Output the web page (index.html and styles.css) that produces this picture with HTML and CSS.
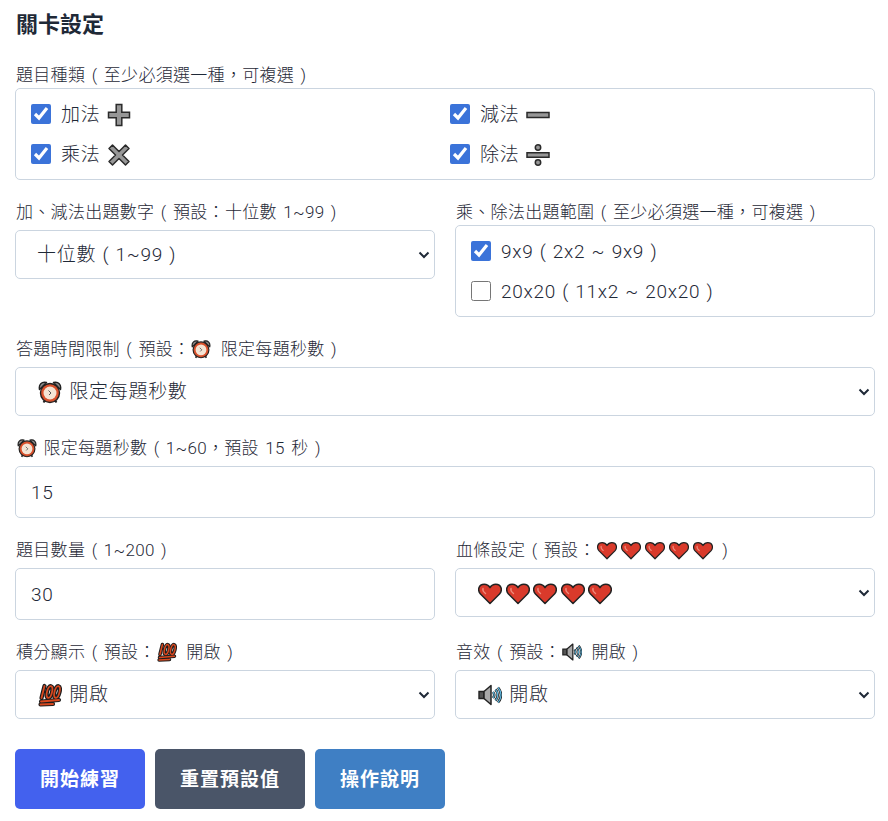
FILE: index.html
```html
<!DOCTYPE html>
<html lang="zh-Hant">
<head>
<meta charset="utf-8">
<title>關卡設定</title>
<link rel="stylesheet" href="styles.css">
</head>
<body>
<svg class="defs" aria-hidden="true">
  <symbol id="i-plus" viewBox="0 0 24 24"><path d="M9.200 1.500h5.600v7.700h7.700v5.600h-7.700v7.700H9.200v-7.700H1.500V9.200h7.700z" fill="#979797" stroke="#2a2a2a" stroke-width="1.500"/></symbol>
  <symbol id="i-minus" viewBox="0 0 24 24"><path d="M1 9.500h22v5H1z" fill="#979797" stroke="#2a2a2a" stroke-width="1.500"/></symbol>
  <symbol id="i-times" viewBox="0 0 24 24"><path d="M5.500 2L12 8.500 18.500 2 22 5.500 15.500 12 22 18.500 18.500 22 12 15.500 5.500 22 2 18.500 8.500 12 2 5.500z" fill="#979797" stroke="#2a2a2a" stroke-width="1.500" stroke-linejoin="round"/></symbol>
  <symbol id="i-div" viewBox="0 0 24 24"><path d="M1 9.800h22v4.400H1z" fill="#979797" stroke="#2a2a2a" stroke-width="1.500"/><circle cx="12" cy="4.500" r="2.700" fill="#979797" stroke="#2a2a2a" stroke-width="1.500"/><circle cx="12" cy="19.500" r="2.700" fill="#979797" stroke="#2a2a2a" stroke-width="1.500"/></symbol>
  <symbol id="i-clock" viewBox="0 0 24 24"><path d="M1.500 9.500C.5 4.500 3.500 1.300 8.500 2.500zM22.500 9.500C23.500 4.500 20.500 1.300 15.500 2.500z" fill="#8d8d8d" stroke="#222" stroke-width="1.400" stroke-linejoin="round"/><path d="M5.500 22.500l2-3M18.500 22.500l-2-3" stroke="#222" stroke-width="2"/><circle cx="12" cy="13" r="9.500" fill="#d9512c" stroke="#222" stroke-width="1.400"/><circle cx="12" cy="13" r="6.500" fill="#f4e4d4"/><path d="M10.500 10.500l2.500 2.500-2 2" fill="none" stroke="#555" stroke-width="1"/></symbol>
  <symbol id="i-heart" viewBox="0 0 24 24"><path d="M12 22.500L2.500 13C-.8 9.200.5 3.200 6.200 3.200c2.800 0 4.700 1.500 5.800 3.400 1.100-1.900 3-3.400 5.800-3.400 5.700 0 7 6 3.700 9.800z" fill="#d93a2b" stroke="#222" stroke-width="1.500" stroke-linejoin="round"/><path d="M5 7.500C4.500 9 5.500 11 7.500 12.500" fill="none" stroke="#ee8b7c" stroke-width="1.400" stroke-linecap="round"/></symbol>
  <symbol id="i-hundred" viewBox="0 0 24 24"><g fill="none" stroke="#1d1d1d" stroke-width="4.200" stroke-linecap="round"><path d="M6.500 3L3.500 15"/><ellipse cx="11.500" cy="9" rx="2.500" ry="6" transform="rotate(14 11.500 9)"/><ellipse cx="19" cy="9" rx="2.500" ry="6" transform="rotate(14 19 9)"/><path d="M3 18.500L21 17M2.500 21.500L15 21"/></g><g fill="none" stroke="#d9481f" stroke-width="1.800" stroke-linecap="round"><path d="M6.500 3L3.500 15"/><ellipse cx="11.500" cy="9" rx="2.500" ry="6" transform="rotate(14 11.500 9)"/><ellipse cx="19" cy="9" rx="2.500" ry="6" transform="rotate(14 19 9)"/><path d="M3 18.500L21 17M2.500 21.500L15 21"/></g></symbol>
  <symbol id="i-speaker" viewBox="0 0 24 24"><path d="M1 8.500h5v7H1z" fill="#555" stroke="#222" stroke-width="1.400"/><path d="M6 8.500L13 2.500v19l-7-6z" fill="#a9a9a9" stroke="#222" stroke-width="1.500" stroke-linejoin="round"/><path d="M15 9c1.500 1.800 1.500 4.200 0 6M17.500 6.500c3 3.200 3 7.800 0 11M20 4.500c4 4.500 4 10.500 0 15" fill="none" stroke="#222" stroke-width="2.600"/><path d="M15 9c1.500 1.800 1.500 4.200 0 6M17.500 6.500c3 3.200 3 7.800 0 11M20 4.500c4 4.500 4 10.500 0 15" fill="none" stroke="#5bb4dc" stroke-width="1.200"/></symbol>
</svg>

<main class="panel">
  <h2 class="title">關卡設定</h2>

  <section class="field">
    <div class="label label-tight">題目種類 ( 至少必須選一種，可複選 )</div>
    <div class="check-box check-grid">
      <label class="check"><input type="checkbox" checked>加法 <svg class="emoji"><use href="#i-plus"/></svg></label>
      <label class="check"><input type="checkbox" checked>減法 <svg class="emoji"><use href="#i-minus"/></svg></label>
      <label class="check"><input type="checkbox" checked>乘法 <svg class="emoji"><use href="#i-times"/></svg></label>
      <label class="check"><input type="checkbox" checked>除法 <svg class="emoji"><use href="#i-div"/></svg></label>
    </div>
  </section>

  <section class="two-col">
    <div>
      <div class="label">加、減法出題數字 ( 預設：十位數 1~99 )</div>
      <div class="select">十位數 ( 1~99 )</div>
    </div>
    <div>
      <div class="label label-tight">乘、除法出題範圍 ( 至少必須選一種，可複選 )</div>
      <div class="check-box check-list">
        <label class="check"><input type="checkbox" checked>9x9 ( 2x2 ~ 9x9 )</label>
        <label class="check"><input type="checkbox">20x20 ( 11x2 ~ 20x20 )</label>
      </div>
    </div>
  </section>

  <section class="field">
    <div class="label">答題時間限制 ( 預設：<svg class="emoji-sm"><use href="#i-clock"/></svg> 限定每題秒數 )</div>
    <div class="select"><svg class="emoji"><use href="#i-clock"/></svg> 限定每題秒數</div>
  </section>

  <section class="field">
    <div class="label"><svg class="emoji-sm emoji-lead"><use href="#i-clock"/></svg> 限定每題秒數 ( 1~60，預設 15 秒 )</div>
    <input class="input" type="text" value="15">
  </section>

  <section class="two-col">
    <div>
      <div class="label">題目數量 ( 1~200 )</div>
      <input class="input" type="text" value="30">
    </div>
    <div>
      <div class="label">血條設定 ( 預設：<span class="hearts-sm"><svg class="emoji-sm"><use href="#i-heart"/></svg><svg class="emoji-sm"><use href="#i-heart"/></svg><svg class="emoji-sm"><use href="#i-heart"/></svg><svg class="emoji-sm"><use href="#i-heart"/></svg><svg class="emoji-sm"><use href="#i-heart"/></svg></span> )</div>
      <div class="select select-hearts"><svg class="emoji"><use href="#i-heart"/></svg><svg class="emoji"><use href="#i-heart"/></svg><svg class="emoji"><use href="#i-heart"/></svg><svg class="emoji"><use href="#i-heart"/></svg><svg class="emoji"><use href="#i-heart"/></svg></div>
    </div>
  </section>

  <section class="two-col">
    <div>
      <div class="label">積分顯示 ( 預設：<svg class="emoji-sm"><use href="#i-hundred"/></svg> 開啟 )</div>
      <div class="select"><svg class="emoji"><use href="#i-hundred"/></svg> 開啟</div>
    </div>
    <div>
      <div class="label">音效 ( 預設：<svg class="emoji-sm"><use href="#i-speaker"/></svg> 開啟 )</div>
      <div class="select"><svg class="emoji"><use href="#i-speaker"/></svg> 開啟</div>
    </div>
  </section>

  <div class="actions">
    <button class="btn btn-start" type="button">開始練習</button>
    <button class="btn btn-reset" type="button">重置預設值</button>
    <button class="btn btn-help" type="button">操作說明</button>
  </div>
</main>
</body>
</html>
```
FILE: styles.css
```css
* { box-sizing: border-box; }
html, body { margin: 0; background: #fff; }
body {
  font-family: "Roboto", "Noto Sans CJK TC", sans-serif;
  font-weight: 300;
  color: #1f2937;
  overflow: hidden;
}
.defs { position: absolute; width: 0; height: 0; }
.panel { padding: 13px 13px 0 15px; }
.title {
  margin: 0 0 26px 1px;
  font-size: 22px;
  line-height: 24px;
  font-weight: 700;
  color: #1f2937;
}
.field { margin-bottom: 20px; }
.two-col {
  display: grid;
  grid-template-columns: 420px 420px;
  column-gap: 20px;
  align-items: start;
  margin-bottom: 20px;
}
.label {
  font-size: 17px;
  letter-spacing: 0.3px;
  word-spacing: 2px;
  line-height: 24px;
  height: 24px;
  margin: 0 0 6px 1px;
  white-space: nowrap;
}
.label-tight { margin-bottom: 1px; }
.check-box {
  border: 1px solid #cbd5e0;
  border-radius: 5px;
  padding: 15px;
  display: grid;
  row-gap: 20px;
}
.check-grid { grid-template-columns: 1fr 1fr; column-gap: 10px; }
.check-list { grid-template-columns: 1fr; }
.check {
  display: flex;
  align-items: center;
  height: 20px;
  padding-top: 1px;
  font-size: 19px;
  letter-spacing: 0.7px;
  word-spacing: 1px;
  line-height: 20px;
  white-space: pre;
}
.check input {
  width: 20px;
  height: 20px;
  margin: -1px 10px 0 0;
  accent-color: #3b73d9;
  flex: none;
}
.select, .input {
  display: block;
  width: 100%;
  border: 1px solid #cbd5e0;
  border-radius: 5px;
  background: #fff;
  font: inherit;
  font-size: 19px;
  letter-spacing: 0.7px;
  word-spacing: 1px;
  color: #1f2937;
}
.select {
  position: relative;
  height: 49px;
  line-height: 47px;
  padding-left: 21px;
  white-space: nowrap;
  background-image: url("data:image/svg+xml,%3Csvg xmlns='http://www.w3.org/2000/svg' width='12' height='8' viewBox='0 0 12 8'%3E%3Cpath d='M1.500 1.500L6 6l4.500-4.500' fill='none' stroke='%231f2937' stroke-width='2'/%3E%3C/svg%3E");
  background-repeat: no-repeat;
  background-position: right 4px center;
}
.input {
  height: 52px;
  padding: 0 15px;
  outline: none;
}
.emoji {
  display: inline-block;
  width: 24px;
  height: 24px;
  vertical-align: -6px;
  margin-right: 2px;
}
.select .emoji:first-child { margin-left: 1px; margin-right: 1px; }
.select-hearts .emoji, .select-hearts .emoji:first-child { margin-right: 3.500px; }
.emoji-sm {
  display: inline-block;
  width: 20px;
  height: 20px;
  vertical-align: -4px;
  margin-left: 1px;
  margin-right: 3px;
}
.emoji-lead { margin-right: 0; }
.hearts-sm { white-space: nowrap; }
.actions { display: flex; gap: 10px; margin-top: 30px; }
.btn {
  height: 60px;
  padding: 0 25px 4px;
  border: 0;
  border-radius: 5px;
  color: #fff;
  font: inherit;
  font-size: 19px;
  font-weight: 700;
  letter-spacing: 1px;
}
.btn-start { background: #4361ee; }
.btn-reset { background: #4a5568; }
.btn-help { background: #3f7fc4; }
```
